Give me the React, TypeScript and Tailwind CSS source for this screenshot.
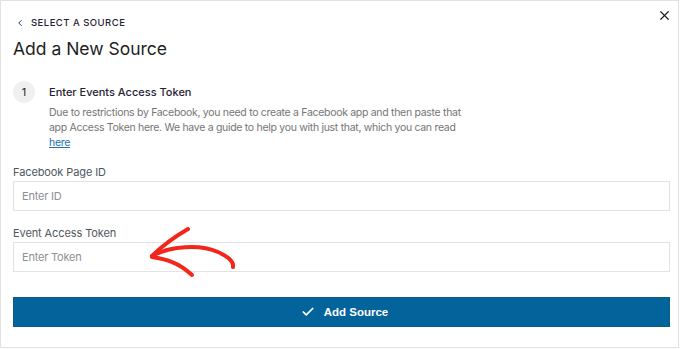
import { Check, ChevronLeft, X } from 'lucide-react';

function Field({ label, placeholder }: { label: string; placeholder: string }) {
  return (
    <div className="flex flex-col gap-[1px]">
      <label className="text-[11px] leading-[16px] tracking-[-0.1px] text-[#50575e]">{label}</label>
      <input
        className="h-[30px] w-full border border-[#e3e3e3] bg-white px-[8px] text-[11px] tracking-[-0.2px] text-[#1e1e1e] placeholder:text-[#8c8f94] outline-none"
        placeholder={placeholder}
      />
    </div>
  );
}

export default function App() {
  return (
    <div
      className="relative h-[350px] w-[680px] bg-white"
      style={{ fontFamily: 'Inter, "Noto Sans", sans-serif' }}
    >
      <div className="h-[348px] w-[679px] border border-[#e2e2e2] bg-white">
        <div className="flex items-start justify-between pl-[12px] pr-[6px] pt-[15px]">
          <div className="flex flex-col">
            <button type="button" className="flex items-center gap-[6px] pl-[2px] text-[9.5px] font-medium uppercase tracking-[0.05em] text-[#1f2436]">
              <ChevronLeft size={10} strokeWidth={2.2} />
              Select a Source
            </button>
            <h1 className="mt-[7px] text-[17.5px] leading-[24px] text-[#1e1e1e]">Add a New Source</h1>
          </div>
          <X size={15} strokeWidth={1.9} className="mt-[-8px] text-[#1e1e1e]" />
        </div>

        <div className="mt-[20px] flex gap-[14px] pl-[12px]">
          <div className="flex h-[22px] w-[22px] shrink-0 items-center justify-center rounded-full bg-[#f0f0f1] text-[11px] text-[#1e1e1e]">
            1
          </div>
          <div className="flex flex-col pt-[3px]">
            <div className="text-[11px] font-medium leading-[16px] text-[#1f2436]">Enter Events Access Token</div>
            <p className="mt-[5px] whitespace-nowrap text-[10.5px] leading-[15px] tracking-[-0.3px] text-[#757575]">
              Due to restrictions by Facebook, you need to create a Facebook app and then paste that
              <br />
              app Access Token here. We have a guide to help you with just that, which you can read
              <br />
              <a href="#" className="text-[#2271b1] underline">here</a>
            </p>
          </div>
        </div>

        <div className="mt-[14px] flex flex-col gap-[14px] pl-[12px] pr-[8px]">
          <Field label="Facebook Page ID" placeholder="Enter ID" />
          <Field label="Event Access Token" placeholder="Enter Token" />
          <button
            type="button"
            className="mt-[11px] flex h-[30px] items-center justify-center gap-[9px] border border-[#0a5a8c] bg-[#03649c] pl-[6px] text-[11.5px] font-bold text-white"
            style={{ fontFamily: '"Liberation Sans", Arial, sans-serif' }}
          >
            <Check size={14} strokeWidth={3} />
            Add Source
          </button>
        </div>
      </div>

      {/* hand-drawn red arrow pointing at the token field */}
      <svg className="absolute left-0 top-0" width="680" height="350" viewBox="0 0 680 350" fill="none">
        <g stroke="#f2261a" strokeWidth="4" strokeLinecap="round" strokeLinejoin="round">
          <path d="M152 256 C 170 246, 200 244, 218 252 C 229 257, 234 262, 233 267" />
          <path d="M152 256 C 163 245, 176 236, 188 229" />
          <path d="M152 257 C 165 259, 178 262, 192 275" />
        </g>
      </svg>
    </div>
  );
}
